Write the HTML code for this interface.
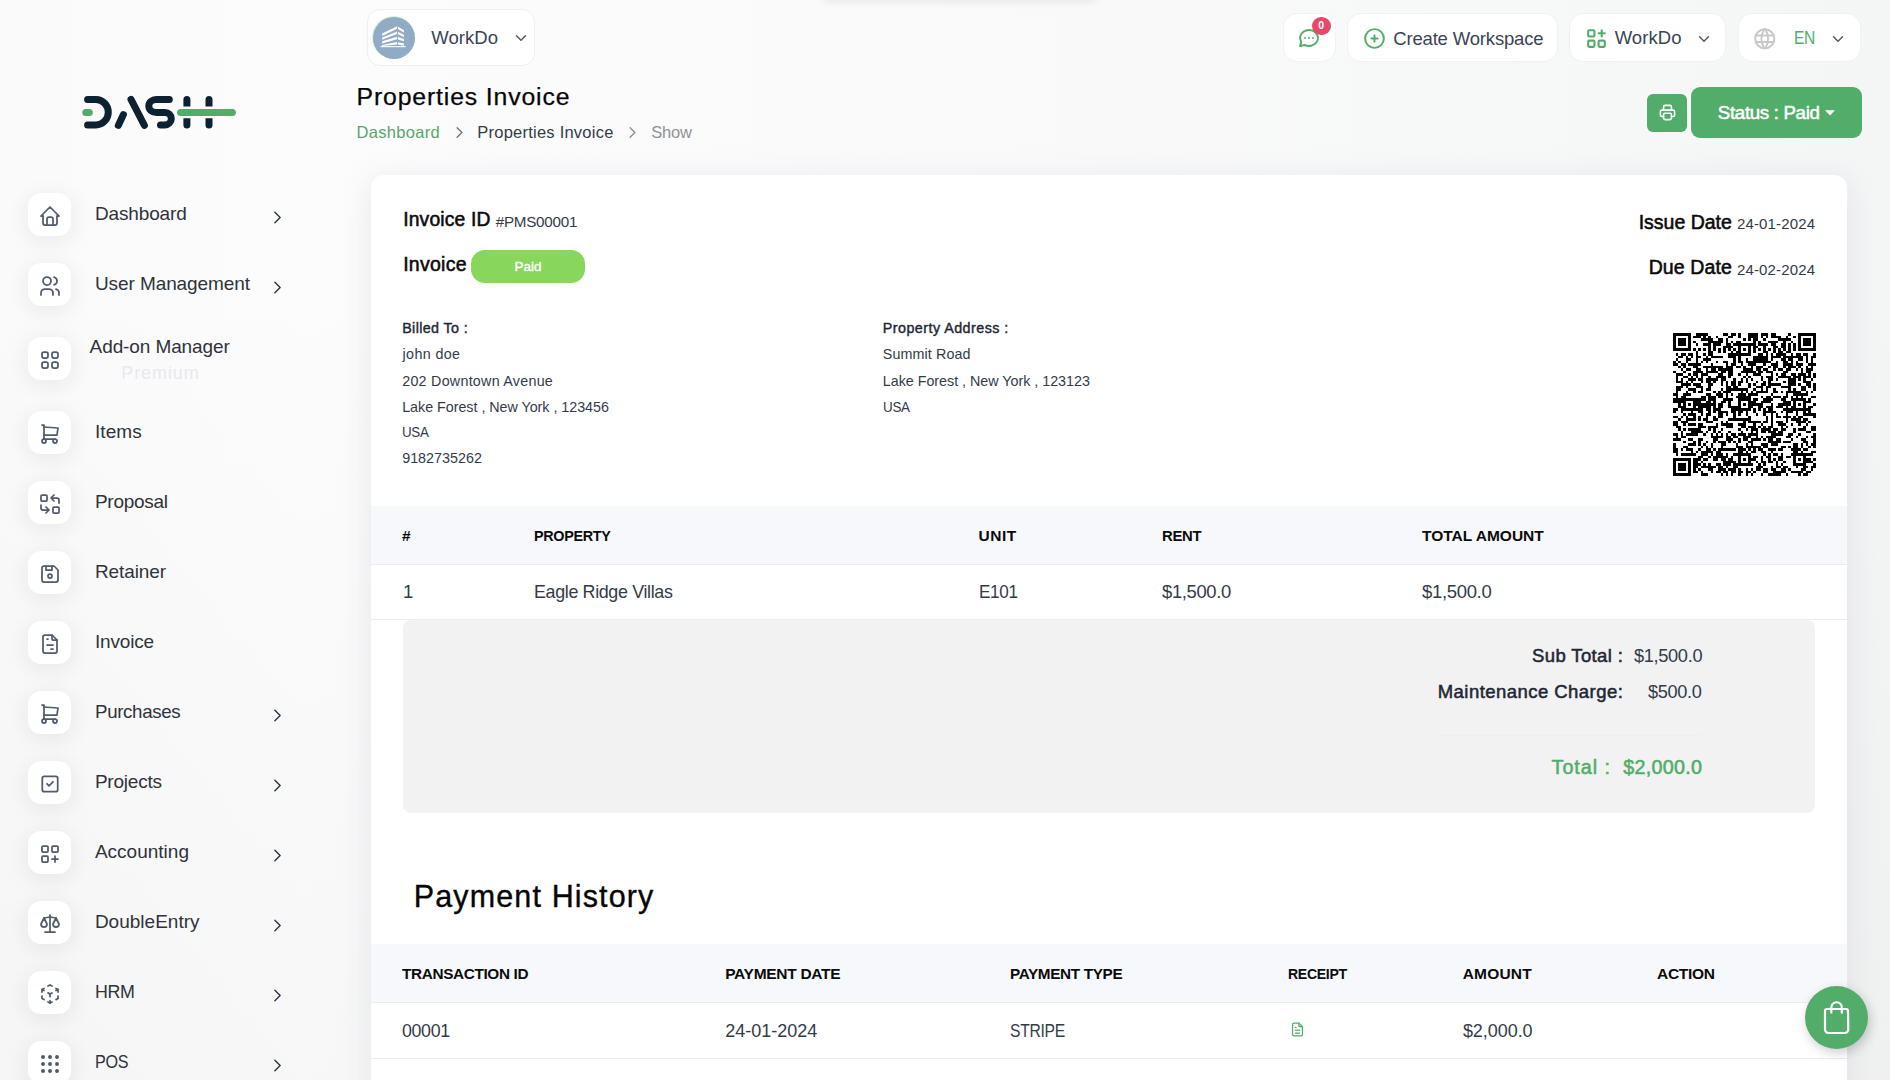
<!DOCTYPE html>
<html><head><meta charset="utf-8"><title>Properties Invoice</title>
<style>
*{box-sizing:border-box;margin:0;padding:0}
html,body{width:1890px;height:1080px;overflow:hidden}
body{font-family:"Liberation Sans",sans-serif;background:#f6f7f7;position:relative}
.tx{position:absolute;white-space:nowrap;line-height:1}
.bgr{position:absolute;left:0;top:0;width:1890px;height:1080px;background:linear-gradient(180deg,rgba(40,60,50,0) 0px,rgba(40,60,50,0) 250px,rgba(40,60,50,.025) 1080px),linear-gradient(90deg,#fafafa 0px,#fcfcfc 300px,#fafafa 900px,#f7f8f8 1500px,#f4f5f5 1890px)}
.ibox{position:absolute;left:28px;width:43px;height:43px;border-radius:13px;background:#fff;box-shadow:0 4px 22px rgba(30,40,50,.085)}
.hb{position:absolute;background:#fff;border-radius:14px;border:1px solid #f1f1f1}
.card{position:absolute;left:371px;top:175px;width:1476px;height:1000px;background:#fff;border-radius:13px;box-shadow:0 6px 30px rgba(182,186,203,.3)}
</style></head>
<body>
<div class="bgr"></div>
<div style="position:absolute;left:820px;top:-20px;width:280px;height:20px;border-radius:10px;box-shadow:0 2px 8px rgba(0,0,0,.08)"></div>
<div class="ibox" style="top:193px"></div>
<svg style="position:absolute;left:37.5px;top:203.6px;" width="24" height="24" viewBox="0 0 24 24" fill="none" stroke="#525b6b" stroke-width="1.75" stroke-linecap="round" stroke-linejoin="round"><path d="M5 12l-2 0l9 -9l9 9l-2 0"/><path d="M5 12v7a2 2 0 0 0 2 2h10a2 2 0 0 0 2 -2v-7"/><path d="M9 21v-6a2 2 0 0 1 2 -2h2a2 2 0 0 1 2 2v6"/></svg>
<div class="tx" style="left:94.90px;top:204.01px;font-size:19px;color:#30333a;font-weight:400;letter-spacing:-0.131px;">Dashboard</div>
<svg style="position:absolute;left:266.9px;top:206.75px;" width="21" height="21" viewBox="0 0 24 24" fill="none" stroke="#293240" stroke-width="1.6" stroke-linecap="round" stroke-linejoin="round"><path d="M9 6l6 6l-6 6"/></svg>
<div class="ibox" style="top:263px"></div>
<svg style="position:absolute;left:37.5px;top:273.6px;" width="24" height="24" viewBox="0 0 24 24" fill="none" stroke="#525b6b" stroke-width="1.75" stroke-linecap="round" stroke-linejoin="round"><path d="M5 7a4 4 0 1 0 8 0a4 4 0 1 0 -8 0"/><path d="M3 21v-2a4 4 0 0 1 4 -4h4a4 4 0 0 1 4 4v2"/><path d="M16 3.13a4 4 0 0 1 0 7.75"/><path d="M21 21v-2a4 4 0 0 0 -3 -3.85"/></svg>
<div class="tx" style="left:94.90px;top:274.01px;font-size:19px;color:#30333a;font-weight:400;letter-spacing:-0.079px;">User Management</div>
<svg style="position:absolute;left:266.9px;top:276.75px;" width="21" height="21" viewBox="0 0 24 24" fill="none" stroke="#293240" stroke-width="1.6" stroke-linecap="round" stroke-linejoin="round"><path d="M9 6l6 6l-6 6"/></svg>
<div class="ibox" style="top:337px"></div>
<svg style="position:absolute;left:37.5px;top:347.6px;" width="24" height="24" viewBox="0 0 24 24" fill="none" stroke="#525b6b" stroke-width="1.75" stroke-linecap="round" stroke-linejoin="round"><rect x="4" y="4" width="6" height="6" rx="2"/><rect x="14" y="4" width="6" height="6" rx="2"/><rect x="4" y="14" width="6" height="6" rx="2"/><rect x="14" y="14" width="6" height="6" rx="2"/></svg>
<div class="tx" style="left:89.60px;top:336.71px;font-size:19px;color:#30333a;font-weight:400;letter-spacing:-0.104px;">Add-on Manager</div>
<div class="tx" style="left:121.30px;top:363.56px;font-size:18px;color:#ebe6f1;font-weight:400;letter-spacing:0.900px;">Premium</div>
<div class="ibox" style="top:411px"></div>
<svg style="position:absolute;left:37.5px;top:421.6px;" width="24" height="24" viewBox="0 0 24 24" fill="none" stroke="#525b6b" stroke-width="1.75" stroke-linecap="round" stroke-linejoin="round"><path d="M4 19a2 2 0 1 0 4 0a2 2 0 1 0 -4 0"/><path d="M15 19a2 2 0 1 0 4 0a2 2 0 1 0 -4 0"/><path d="M17 17h-11v-14h-2"/><path d="M6 5l14 1l-1 7h-13"/></svg>
<div class="tx" style="left:94.90px;top:422.01px;font-size:19px;color:#30333a;font-weight:400;letter-spacing:0.112px;">Items</div>
<div class="ibox" style="top:481px"></div>
<svg style="position:absolute;left:37.5px;top:491.6px;" width="24" height="24" viewBox="0 0 24 24" fill="none" stroke="#525b6b" stroke-width="1.75" stroke-linecap="round" stroke-linejoin="round"><rect x="3" y="3" width="6" height="6" rx="1"/><rect x="15" y="15" width="6" height="6" rx="1"/><path d="M21 11v-3a2 2 0 0 0 -2 -2h-6l3 3m0 -6l-3 3"/><path d="M3 13v3a2 2 0 0 0 2 2h6l-3 -3m0 6l3 -3"/></svg>
<div class="tx" style="left:94.90px;top:492.01px;font-size:19px;color:#30333a;font-weight:400;letter-spacing:-0.257px;">Proposal</div>
<div class="ibox" style="top:551px"></div>
<svg style="position:absolute;left:37.5px;top:561.6px;" width="24" height="24" viewBox="0 0 24 24" fill="none" stroke="#525b6b" stroke-width="1.75" stroke-linecap="round" stroke-linejoin="round"><path d="M6 4h10l4 4v10a2 2 0 0 1 -2 2h-12a2 2 0 0 1 -2 -2v-12a2 2 0 0 1 2 -2"/><path d="M10 14a2 2 0 1 0 4 0a2 2 0 1 0 -4 0"/><path d="M14 4l0 4l-6 0l0 -4"/></svg>
<div class="tx" style="left:94.90px;top:562.01px;font-size:19px;color:#30333a;font-weight:400;letter-spacing:-0.086px;">Retainer</div>
<div class="ibox" style="top:621px"></div>
<svg style="position:absolute;left:37.5px;top:631.6px;" width="24" height="24" viewBox="0 0 24 24" fill="none" stroke="#525b6b" stroke-width="1.75" stroke-linecap="round" stroke-linejoin="round"><path d="M14 3v4a1 1 0 0 0 1 1h4"/><path d="M17 21h-10a2 2 0 0 1 -2 -2v-14a2 2 0 0 1 2 -2h7l5 5v11a2 2 0 0 1 -2 2z"/><path d="M9 7l1 0"/><path d="M9 13l6 0"/><path d="M13 17l2 0"/></svg>
<div class="tx" style="left:94.90px;top:632.01px;font-size:19px;color:#30333a;font-weight:400;letter-spacing:-0.167px;">Invoice</div>
<div class="ibox" style="top:691px"></div>
<svg style="position:absolute;left:37.5px;top:701.6px;" width="24" height="24" viewBox="0 0 24 24" fill="none" stroke="#525b6b" stroke-width="1.75" stroke-linecap="round" stroke-linejoin="round"><path d="M4 19a2 2 0 1 0 4 0a2 2 0 1 0 -4 0"/><path d="M15 19a2 2 0 1 0 4 0a2 2 0 1 0 -4 0"/><path d="M17 17h-11v-14h-2"/><path d="M6 5l14 1l-1 7h-13"/></svg>
<div class="tx" style="left:94.90px;top:702.01px;font-size:19px;color:#30333a;font-weight:400;letter-spacing:-0.350px;transform:scaleX(0.9856);transform-origin:0.00px 0;">Purchases</div>
<svg style="position:absolute;left:266.9px;top:704.75px;" width="21" height="21" viewBox="0 0 24 24" fill="none" stroke="#293240" stroke-width="1.6" stroke-linecap="round" stroke-linejoin="round"><path d="M9 6l6 6l-6 6"/></svg>
<div class="ibox" style="top:761px"></div>
<svg style="position:absolute;left:37.5px;top:771.6px;" width="24" height="24" viewBox="0 0 24 24" fill="none" stroke="#525b6b" stroke-width="1.75" stroke-linecap="round" stroke-linejoin="round"><rect x="4.3" y="4.3" width="15.4" height="15.4" rx="2"/><path d="M9 11.8l2 2l4 -4"/></svg>
<div class="tx" style="left:94.90px;top:772.01px;font-size:19px;color:#30333a;font-weight:400;letter-spacing:-0.207px;">Projects</div>
<svg style="position:absolute;left:266.9px;top:774.75px;" width="21" height="21" viewBox="0 0 24 24" fill="none" stroke="#293240" stroke-width="1.6" stroke-linecap="round" stroke-linejoin="round"><path d="M9 6l6 6l-6 6"/></svg>
<div class="ibox" style="top:831px"></div>
<svg style="position:absolute;left:37.5px;top:841.6px;" width="24" height="24" viewBox="0 0 24 24" fill="none" stroke="#525b6b" stroke-width="1.75" stroke-linecap="round" stroke-linejoin="round"><rect x="4" y="4" width="6" height="6" rx="1"/><rect x="14" y="4" width="6" height="6" rx="1"/><rect x="4" y="14" width="6" height="6" rx="1"/><path d="M14 17h6m-3 -3v6"/></svg>
<div class="tx" style="left:94.90px;top:842.01px;font-size:19px;color:#30333a;font-weight:400;letter-spacing:0.011px;">Accounting</div>
<svg style="position:absolute;left:266.9px;top:844.75px;" width="21" height="21" viewBox="0 0 24 24" fill="none" stroke="#293240" stroke-width="1.6" stroke-linecap="round" stroke-linejoin="round"><path d="M9 6l6 6l-6 6"/></svg>
<div class="ibox" style="top:901px"></div>
<svg style="position:absolute;left:37.5px;top:911.6px;" width="24" height="24" viewBox="0 0 24 24" fill="none" stroke="#525b6b" stroke-width="1.75" stroke-linecap="round" stroke-linejoin="round"><path d="M7 20l10 0"/><path d="M6 6l6 -1l6 1"/><path d="M12 3l0 17"/><path d="M9 12l-3 -6l-3 6a3 3 0 0 0 6 0"/><path d="M21 12l-3 -6l-3 6a3 3 0 0 0 6 0"/></svg>
<div class="tx" style="left:94.90px;top:912.01px;font-size:19px;color:#30333a;font-weight:400;letter-spacing:0.005px;">DoubleEntry</div>
<svg style="position:absolute;left:266.9px;top:914.75px;" width="21" height="21" viewBox="0 0 24 24" fill="none" stroke="#293240" stroke-width="1.6" stroke-linecap="round" stroke-linejoin="round"><path d="M9 6l6 6l-6 6"/></svg>
<div class="ibox" style="top:971px"></div>
<svg style="position:absolute;left:37.5px;top:981.6px;" width="24" height="24" viewBox="0 0 24 24" fill="none" stroke="#525b6b" stroke-width="1.75" stroke-linecap="round" stroke-linejoin="round"><path d="M6 17.6l-2 -1.1v-2.5"/><path d="M4 10v-2.5l2 -1.1"/><path d="M10 4.1l2 -1.1l2 1.1"/><path d="M18 6.4l2 1.1v2.5"/><path d="M20 14v2.5l-2 1.12"/><path d="M14 19.9l-2 1.1l-2 -1.1"/><path d="M12 12l2 -1.1"/><path d="M12 12l0 2.5"/><path d="M12 18.5l0 2.5"/><path d="M12 12l-2 -1.12"/><path d="M18 8.6l2 -1.1"/><path d="M6 8.6l-2 -1.1"/></svg>
<div class="tx" style="left:94.90px;top:982.01px;font-size:19px;color:#30333a;font-weight:400;letter-spacing:-0.350px;transform:scaleX(0.9377);transform-origin:0.00px 0;">HRM</div>
<svg style="position:absolute;left:266.9px;top:984.75px;" width="21" height="21" viewBox="0 0 24 24" fill="none" stroke="#293240" stroke-width="1.6" stroke-linecap="round" stroke-linejoin="round"><path d="M9 6l6 6l-6 6"/></svg>
<div class="ibox" style="top:1041px"></div>
<svg style="position:absolute;left:37.5px;top:1051.6px;" width="24" height="24" viewBox="0 0 24 24" fill="none" stroke="#525b6b" stroke-width="1.75" stroke-linecap="round" stroke-linejoin="round"><circle cx="5" cy="5" r="1.1" fill="currentColor"/><circle cx="5" cy="12" r="1.1" fill="currentColor"/><circle cx="5" cy="19" r="1.1" fill="currentColor"/><circle cx="12" cy="5" r="1.1" fill="currentColor"/><circle cx="12" cy="12" r="1.1" fill="currentColor"/><circle cx="12" cy="19" r="1.1" fill="currentColor"/><circle cx="19" cy="5" r="1.1" fill="currentColor"/><circle cx="19" cy="12" r="1.1" fill="currentColor"/><circle cx="19" cy="19" r="1.1" fill="currentColor"/></svg>
<div class="tx" style="left:94.90px;top:1052.01px;font-size:19px;color:#30333a;font-weight:400;letter-spacing:-0.350px;transform:scaleX(0.8503);transform-origin:0.00px 0;">POS</div>
<svg style="position:absolute;left:266.9px;top:1054.75px;" width="21" height="21" viewBox="0 0 24 24" fill="none" stroke="#293240" stroke-width="1.6" stroke-linecap="round" stroke-linejoin="round"><path d="M9 6l6 6l-6 6"/></svg>
<svg style="position:absolute;left:0;top:0" width="260" height="160" fill="none" stroke-linecap="round">
<g stroke="#0c2132" stroke-width="7">
<path d="M87.6 99.5H96A12.3 12.7 0 0 1 96 124.9H87.6"/>
<path d="M118.3 125.4L123.4 114.6"/>
<path d="M131 99.3L144.4 125.4"/>
<path d="M169.3 99.5H156.2A7.4 6.5 0 0 0 156.2 112.5H165A6.3 6.2 0 0 1 165 124.9H160.5"/>
<path d="M183.4 106.5V99.4A3.5 3.5 0 0 1 190.4 99.4V106.5Z" fill="#0c2132" stroke="none"/><path d="M183.4 118.2V125.1A3.5 3.5 0 0 0 190.4 125.1V118.2Z" fill="#0c2132" stroke="none"/>
<path d="M205.5 106.5V99.4A3.5 3.5 0 0 1 212.5 99.4V106.5Z" fill="#0c2132" stroke="none"/><path d="M205.5 118.2V125.1A3.5 3.5 0 0 0 212.5 125.1V118.2Z" fill="#0c2132" stroke="none"/>
</g>
<g stroke="#52ad6b" stroke-width="7"><path d="M85.8 112.5H89.3"/><path d="M180.6 112.5H232.4"/></g>
</svg>
<div class="hb" style="left:367px;top:9px;width:168px;height:57px;border:1px solid #efefef;border-radius:13px"></div>
<div style="position:absolute;left:372px;top:16px;width:43px;height:43px;border-radius:50%;background:#d6eedd"></div>
<div style="position:absolute;left:373px;top:17px;width:42px;height:42px;border-radius:50%;background:#91abc4"></div>
<svg style="position:absolute;left:373px;top:17px" width="42" height="42" viewBox="0 0 42 42" fill="#fff">
<path d="M9.2 16.6L24 9.3V11.8L9.2 19Z"/><path d="M9.2 20.4L24 14.6V17L9.2 22.8Z"/><path d="M9.2 24.2L24 19.8V22.2L9.2 26.5Z"/><path d="M9.2 27.9L24 25V27.4L9.2 29Z"/>
<path d="M24.9 9.5L30.9 13.2V15.4L24.9 11.9Z"/><path d="M24.9 14.8L30.9 17.7V19.9L24.9 17.2Z"/><path d="M24.9 20L30.9 22.1V24.3L24.9 22.4Z"/><path d="M24.9 25.2L30.9 26.5V28.7L24.9 27.6Z"/>
<rect x="7.6" y="29.1" width="25.1" height="1.1"/>
</svg>
<div class="tx" style="left:431.30px;top:29.34px;font-size:18.5px;color:#3a4454;font-weight:400;letter-spacing:0.060px;">WorkDo</div>
<svg style="position:absolute;left:511.5px;top:28.7px;" width="18" height="18" viewBox="0 0 24 24" fill="none" stroke="#555b66" stroke-width="2" stroke-linecap="round" stroke-linejoin="round"><path d="M6 9l6 6l6 -6"/></svg>
<div class="hb" style="left:1283px;top:13px;width:53px;height:49px"></div>
<svg style="position:absolute;left:1296.8px;top:25.8px;" width="24" height="24" viewBox="0 0 24 24" fill="none" stroke="#52ad6b" stroke-width="1.95" stroke-linecap="round" stroke-linejoin="round"><path d="M3 20l1.3 -3.9c-2.324 -3.437 -1.426 -7.872 2.1 -10.374c3.526 -2.501 8.59 -2.296 11.845 .48c3.255 2.777 3.695 7.266 1.029 10.501c-2.666 3.235 -7.615 4.215 -11.574 2.293l-4.7 1"/><path d="M12 12l0 .01"/><path d="M8 12l0 .01"/><path d="M16 12l0 .01"/></svg>
<div style="position:absolute;left:1312px;top:16.5px;width:18.5px;height:18.5px;border-radius:50%;background:#e64a68"></div>
<div class="tx" style="left:1318.30px;top:20.31px;font-size:10.5px;color:#fff;font-weight:700;letter-spacing:0.000px;">0</div>
<div class="hb" style="left:1347px;top:13px;width:211px;height:49px"></div>
<svg style="position:absolute;left:1361.7px;top:25.5px;" width="25" height="25" viewBox="0 0 24 24" fill="none" stroke="#52ad6b" stroke-width="1.9" stroke-linecap="round" stroke-linejoin="round"><path d="M3 12a9 9 0 1 0 18 0a9 9 0 0 0 -18 0"/><path d="M9 12h6"/><path d="M12 9v6"/></svg>
<div class="tx" style="left:1393.20px;top:29.54px;font-size:18.5px;color:#3a4454;font-weight:400;letter-spacing:-0.163px;">Create Workspace</div>
<div class="hb" style="left:1569px;top:13px;width:157px;height:49px"></div>
<svg style="position:absolute;left:1583.5px;top:25.5px;" width="25" height="25" viewBox="0 0 24 24" fill="none" stroke="#52ad6b" stroke-width="2" stroke-linecap="round" stroke-linejoin="round"><rect x="4" y="4" width="6" height="6" rx="1"/><rect x="4" y="14" width="6" height="6" rx="1"/><rect x="14" y="14" width="6" height="6" rx="1"/><path d="M14 7h6m-3 -3v6"/></svg>
<div class="tx" style="left:1614.70px;top:29.24px;font-size:18.5px;color:#3a4454;font-weight:400;letter-spacing:0.060px;">WorkDo</div>
<svg style="position:absolute;left:1694.5px;top:29.5px;" width="18" height="18" viewBox="0 0 24 24" fill="none" stroke="#555b66" stroke-width="2" stroke-linecap="round" stroke-linejoin="round"><path d="M6 9l6 6l6 -6"/></svg>
<div class="hb" style="left:1738px;top:13px;width:123px;height:49px"></div>
<svg style="position:absolute;left:1751.8px;top:25.5px;" width="25.5" height="25.5" viewBox="0 0 24 24" fill="none" stroke="#c9c9c9" stroke-width="1.9" stroke-linecap="round" stroke-linejoin="round"><path d="M3 12a9 9 0 1 0 18 0a9 9 0 0 0 -18 0"/><path d="M3.6 9h16.8"/><path d="M3.6 15h16.8"/><path d="M11.5 3a17 17 0 0 0 0 18"/><path d="M12.5 3a17 17 0 0 1 0 18"/></svg>
<div class="tx" style="left:1793.80px;top:29.24px;font-size:18.5px;color:#52ad6b;font-weight:400;letter-spacing:-0.350px;transform:scaleX(0.8402);transform-origin:0.00px 0;">EN</div>
<svg style="position:absolute;left:1828.8px;top:29.5px;" width="18" height="18" viewBox="0 0 24 24" fill="none" stroke="#555b66" stroke-width="2" stroke-linecap="round" stroke-linejoin="round"><path d="M6 9l6 6l6 -6"/></svg>
<div class="tx" style="left:356.50px;top:85.30px;font-size:24.8px;color:#060606;font-weight:400;letter-spacing:0.853px;-webkit-text-stroke:0.25px #060606;">Properties Invoice</div>
<div class="tx" style="left:356.50px;top:123.53px;font-size:16.5px;color:#5aa56d;font-weight:400;letter-spacing:0.300px;">Dashboard</div>
<svg style="position:absolute;left:449.5px;top:122.5px;" width="19" height="19" viewBox="0 0 24 24" fill="none" stroke="#6b7280" stroke-width="1.7" stroke-linecap="round" stroke-linejoin="round"><path d="M9 6l6 6l-6 6"/></svg>
<div class="tx" style="left:477.30px;top:123.53px;font-size:16.5px;color:#343b47;font-weight:400;letter-spacing:0.232px;">Properties Invoice</div>
<svg style="position:absolute;left:623px;top:122.5px;" width="19" height="19" viewBox="0 0 24 24" fill="none" stroke="#8a9099" stroke-width="1.7" stroke-linecap="round" stroke-linejoin="round"><path d="M9 6l6 6l-6 6"/></svg>
<div class="tx" style="left:651.20px;top:123.53px;font-size:16.5px;color:#8e9397;font-weight:400;letter-spacing:-0.183px;">Show</div>
<div style="position:absolute;left:1647px;top:94px;width:40px;height:38px;border-radius:6px;background:#52ad6b"></div>
<svg style="position:absolute;left:1658px;top:103.2px;" width="19" height="19" viewBox="0 0 24 24" fill="none" stroke="#fff" stroke-width="2" stroke-linecap="round" stroke-linejoin="round"><path d="M17 17h2a2 2 0 0 0 2 -2v-4a2 2 0 0 0 -2 -2h-14a2 2 0 0 0 -2 2v4a2 2 0 0 0 2 2h2"/><path d="M17 9v-4a2 2 0 0 0 -2 -2h-6a2 2 0 0 0 -2 2v4"/><path d="M7 15a2 2 0 0 1 2 -2h6a2 2 0 0 1 2 2v4a2 2 0 0 1 -2 2h-6a2 2 0 0 1 -2 -2z"/></svg>
<div style="position:absolute;left:1691px;top:87px;width:171px;height:51px;border-radius:9px;background:#52ad6b"></div>
<div class="tx" style="left:1717.80px;top:104.07px;font-size:18.7px;color:#fff;font-weight:400;letter-spacing:-0.321px;-webkit-text-stroke:0.52px #fff;">Status : Paid</div>
<svg style="position:absolute;left:1825px;top:110px" width="10" height="6"><path d="M0 0.3H10L5 5.5z" fill="#fff"/></svg>
<div class="card"></div>
<div class="tx" style="left:403.20px;top:210.36px;font-size:19.3px;color:#0b0b0b;font-weight:400;letter-spacing:0.178px;-webkit-text-stroke:0.54px #0b0b0b;">Invoice ID</div>
<div class="tx" style="left:495.70px;top:213.83px;font-size:15.2px;color:#343b47;font-weight:400;letter-spacing:-0.244px;">#PMS00001</div>
<div class="tx" style="left:403.20px;top:254.59px;font-size:19.5px;color:#0b0b0b;font-weight:400;letter-spacing:0.250px;-webkit-text-stroke:0.55px #0b0b0b;">Invoice</div>
<div style="position:absolute;left:471px;top:250px;width:114px;height:33px;border-radius:14px;background:#89d65c"></div>
<div class="tx" style="left:514.50px;top:259.67px;font-size:13.5px;color:#fff;font-weight:400;letter-spacing:-0.000px;-webkit-text-stroke:0.38px #fff;">Paid</div>
<div class="tx" style="left:1638.70px;top:212.59px;font-size:19.5px;color:#0b0b0b;font-weight:400;letter-spacing:-0.011px;-webkit-text-stroke:0.55px #0b0b0b;">Issue Date</div>
<div class="tx" style="left:1736.90px;top:216.40px;font-size:15px;color:#343b47;font-weight:400;letter-spacing:0.161px;">24-01-2024</div>
<div class="tx" style="left:1648.70px;top:258.49px;font-size:19.5px;color:#0b0b0b;font-weight:400;letter-spacing:0.100px;-webkit-text-stroke:0.55px #0b0b0b;">Due Date</div>
<div class="tx" style="left:1736.90px;top:262.30px;font-size:15px;color:#343b47;font-weight:400;letter-spacing:0.161px;">24-02-2024</div>
<div class="tx" style="left:402.20px;top:321.09px;font-size:14.3px;color:#1f2733;font-weight:400;letter-spacing:0.375px;-webkit-text-stroke:0.40px #1f2733;">Billed To :</div>
<div class="tx" style="left:402.55px;top:347.09px;font-size:14.3px;color:#343b47;font-weight:400;letter-spacing:0.371px;">john doe</div>
<div class="tx" style="left:402.20px;top:373.79px;font-size:14.3px;color:#343b47;font-weight:400;letter-spacing:0.258px;">202 Downtown Avenue</div>
<div class="tx" style="left:402.20px;top:399.79px;font-size:14.3px;color:#343b47;font-weight:400;letter-spacing:-0.023px;">Lake Forest , New York , 123456</div>
<div class="tx" style="left:402.20px;top:425.49px;font-size:14.3px;color:#343b47;font-weight:400;letter-spacing:-0.350px;transform:scaleX(0.9373);transform-origin:0.00px 0;">USA</div>
<div class="tx" style="left:402.20px;top:451.39px;font-size:14.3px;color:#343b47;font-weight:400;letter-spacing:0.017px;">9182735262</div>
<div class="tx" style="left:882.80px;top:321.09px;font-size:14.3px;color:#1f2733;font-weight:400;letter-spacing:0.462px;-webkit-text-stroke:0.40px #1f2733;">Property Address :</div>
<div class="tx" style="left:882.80px;top:347.09px;font-size:14.3px;color:#343b47;font-weight:400;letter-spacing:0.110px;">Summit Road</div>
<div class="tx" style="left:882.80px;top:373.79px;font-size:14.3px;color:#343b47;font-weight:400;letter-spacing:-0.013px;">Lake Forest , New York , 123123</div>
<div class="tx" style="left:882.80px;top:399.79px;font-size:14.3px;color:#343b47;font-weight:400;letter-spacing:-0.350px;transform:scaleX(0.9408);transform-origin:0.00px 0;">USA</div>
<svg style="position:absolute;left:1673px;top:333px" width="142.5" height="142.5" viewBox="0 0 57 57" shape-rendering="crispEdges"><path fill="#000" d="M0 0h7v1h-7zM9 0h5v1h-5zM20 0h2v1h-2zM23 0h2v1h-2zM26 0h1v1h-1zM30 0h4v1h-4zM35 0h3v1h-3zM39 0h2v1h-2zM46 0h1v1h-1zM50 0h7v1h-7zM0 1h1v1h-1zM6 1h1v1h-1zM8 1h3v1h-3zM12 1h1v1h-1zM14 1h1v1h-1zM17 1h1v1h-1zM22 1h2v1h-2zM26 1h1v1h-1zM30 1h4v1h-4zM35 1h1v1h-1zM37 1h1v1h-1zM39 1h4v1h-4zM45 1h1v1h-1zM48 1h1v1h-1zM50 1h1v1h-1zM56 1h1v1h-1zM0 2h1v1h-1zM2 2h3v1h-3zM6 2h1v1h-1zM11 2h5v1h-5zM18 2h2v1h-2zM21 2h1v1h-1zM28 2h1v1h-1zM30 2h1v1h-1zM32 2h2v1h-2zM36 2h1v1h-1zM42 2h5v1h-5zM50 2h1v1h-1zM52 2h3v1h-3zM56 2h1v1h-1zM0 3h1v1h-1zM2 3h3v1h-3zM6 3h1v1h-1zM8 3h1v1h-1zM14 3h6v1h-6zM21 3h1v1h-1zM23 3h1v1h-1zM25 3h2v1h-2zM32 3h1v1h-1zM34 3h1v1h-1zM38 3h4v1h-4zM44 3h1v1h-1zM47 3h1v1h-1zM50 3h1v1h-1zM52 3h3v1h-3zM56 3h1v1h-1zM0 4h1v1h-1zM2 4h3v1h-3zM6 4h1v1h-1zM9 4h1v1h-1zM12 4h3v1h-3zM16 4h3v1h-3zM21 4h2v1h-2zM24 4h9v1h-9zM34 4h4v1h-4zM39 4h2v1h-2zM43 4h2v1h-2zM46 4h1v1h-1zM48 4h1v1h-1zM50 4h1v1h-1zM52 4h3v1h-3zM56 4h1v1h-1zM0 5h1v1h-1zM6 5h1v1h-1zM14 5h1v1h-1zM16 5h1v1h-1zM20 5h4v1h-4zM26 5h1v1h-1zM30 5h1v1h-1zM32 5h2v1h-2zM36 5h1v1h-1zM40 5h2v1h-2zM43 5h2v1h-2zM46 5h1v1h-1zM48 5h1v1h-1zM50 5h1v1h-1zM56 5h1v1h-1zM0 6h7v1h-7zM8 6h1v1h-1zM10 6h1v1h-1zM12 6h1v1h-1zM14 6h1v1h-1zM16 6h1v1h-1zM18 6h1v1h-1zM20 6h1v1h-1zM22 6h1v1h-1zM24 6h1v1h-1zM26 6h1v1h-1zM28 6h1v1h-1zM30 6h1v1h-1zM32 6h1v1h-1zM34 6h1v1h-1zM36 6h1v1h-1zM38 6h1v1h-1zM40 6h1v1h-1zM42 6h1v1h-1zM44 6h1v1h-1zM46 6h1v1h-1zM48 6h1v1h-1zM50 6h7v1h-7zM9 7h1v1h-1zM14 7h2v1h-2zM18 7h1v1h-1zM20 7h1v1h-1zM23 7h1v1h-1zM25 7h2v1h-2zM30 7h1v1h-1zM32 7h1v1h-1zM36 7h2v1h-2zM40 7h1v1h-1zM42 7h2v1h-2zM45 7h2v1h-2zM1 8h1v1h-1zM3 8h2v1h-2zM6 8h2v1h-2zM9 8h1v1h-1zM12 8h1v1h-1zM14 8h2v1h-2zM22 8h9v1h-9zM34 8h2v1h-2zM37 8h1v1h-1zM39 8h1v1h-1zM41 8h4v1h-4zM47 8h1v1h-1zM49 8h2v1h-2zM52 8h2v1h-2zM56 8h1v1h-1zM2 9h2v1h-2zM5 9h1v1h-1zM7 9h1v1h-1zM9 9h2v1h-2zM13 9h1v1h-1zM15 9h5v1h-5zM22 9h3v1h-3zM26 9h1v1h-1zM32 9h6v1h-6zM39 9h4v1h-4zM44 9h8v1h-8zM53 9h1v1h-1zM55 9h2v1h-2zM1 10h1v1h-1zM5 10h2v1h-2zM9 10h1v1h-1zM12 10h3v1h-3zM24 10h1v1h-1zM26 10h1v1h-1zM29 10h1v1h-1zM32 10h6v1h-6zM39 10h1v1h-1zM43 10h2v1h-2zM46 10h2v1h-2zM50 10h2v1h-2zM53 10h1v1h-1zM55 10h1v1h-1zM0 11h1v1h-1zM2 11h1v1h-1zM5 11h1v1h-1zM9 11h1v1h-1zM11 11h1v1h-1zM13 11h1v1h-1zM17 11h1v1h-1zM20 11h2v1h-2zM24 11h1v1h-1zM26 11h2v1h-2zM29 11h10v1h-10zM41 11h1v1h-1zM44 11h2v1h-2zM47 11h1v1h-1zM49 11h1v1h-1zM53 11h1v1h-1zM55 11h1v1h-1zM0 12h2v1h-2zM3 12h2v1h-2zM6 12h5v1h-5zM15 12h1v1h-1zM21 12h1v1h-1zM23 12h2v1h-2zM27 12h1v1h-1zM30 12h3v1h-3zM36 12h1v1h-1zM39 12h3v1h-3zM44 12h4v1h-4zM49 12h3v1h-3zM54 12h3v1h-3zM2 13h1v1h-1zM4 13h1v1h-1zM8 13h2v1h-2zM12 13h8v1h-8zM21 13h3v1h-3zM25 13h2v1h-2zM28 13h1v1h-1zM31 13h1v1h-1zM33 13h3v1h-3zM38 13h1v1h-1zM40 13h2v1h-2zM44 13h1v1h-1zM46 13h3v1h-3zM50 13h1v1h-1zM53 13h1v1h-1zM55 13h1v1h-1zM3 14h1v1h-1zM5 14h2v1h-2zM9 14h2v1h-2zM13 14h1v1h-1zM15 14h2v1h-2zM18 14h6v1h-6zM28 14h4v1h-4zM33 14h2v1h-2zM36 14h2v1h-2zM40 14h1v1h-1zM42 14h2v1h-2zM45 14h2v1h-2zM49 14h1v1h-1zM51 14h1v1h-1zM53 14h3v1h-3zM0 15h1v1h-1zM4 15h1v1h-1zM8 15h4v1h-4zM13 15h5v1h-5zM19 15h2v1h-2zM22 15h2v1h-2zM27 15h6v1h-6zM34 15h2v1h-2zM37 15h3v1h-3zM44 15h2v1h-2zM51 15h1v1h-1zM53 15h2v1h-2zM1 16h3v1h-3zM6 16h1v1h-1zM8 16h2v1h-2zM11 16h3v1h-3zM18 16h2v1h-2zM22 16h2v1h-2zM26 16h1v1h-1zM29 16h1v1h-1zM32 16h3v1h-3zM39 16h1v1h-1zM41 16h1v1h-1zM43 16h2v1h-2zM47 16h2v1h-2zM50 16h3v1h-3zM54 16h1v1h-1zM56 16h1v1h-1zM1 17h1v1h-1zM4 17h2v1h-2zM7 17h1v1h-1zM9 17h1v1h-1zM11 17h1v1h-1zM14 17h1v1h-1zM17 17h4v1h-4zM22 17h1v1h-1zM28 17h1v1h-1zM30 17h1v1h-1zM35 17h1v1h-1zM37 17h3v1h-3zM42 17h5v1h-5zM48 17h3v1h-3zM52 17h3v1h-3zM56 17h1v1h-1zM1 18h1v1h-1zM3 18h1v1h-1zM6 18h3v1h-3zM10 18h2v1h-2zM13 18h5v1h-5zM19 18h2v1h-2zM24 18h1v1h-1zM27 18h1v1h-1zM29 18h1v1h-1zM31 18h1v1h-1zM35 18h1v1h-1zM38 18h2v1h-2zM41 18h1v1h-1zM46 18h3v1h-3zM50 18h1v1h-1zM52 18h1v1h-1zM55 18h1v1h-1zM1 19h3v1h-3zM5 19h1v1h-1zM7 19h1v1h-1zM11 19h1v1h-1zM13 19h2v1h-2zM16 19h1v1h-1zM19 19h1v1h-1zM21 19h1v1h-1zM23 19h2v1h-2zM26 19h2v1h-2zM29 19h1v1h-1zM33 19h1v1h-1zM36 19h1v1h-1zM38 19h1v1h-1zM44 19h1v1h-1zM46 19h3v1h-3zM52 19h3v1h-3zM3 20h4v1h-4zM8 20h3v1h-3zM14 20h2v1h-2zM19 20h1v1h-1zM21 20h1v1h-1zM23 20h2v1h-2zM26 20h1v1h-1zM30 20h1v1h-1zM32 20h1v1h-1zM35 20h2v1h-2zM38 20h5v1h-5zM46 20h3v1h-3zM50 20h1v1h-1zM53 20h2v1h-2zM56 20h1v1h-1zM1 21h3v1h-3zM5 21h1v1h-1zM9 21h3v1h-3zM14 21h1v1h-1zM21 21h2v1h-2zM24 21h2v1h-2zM30 21h1v1h-1zM33 21h3v1h-3zM37 21h2v1h-2zM43 21h4v1h-4zM51 21h2v1h-2zM54 21h1v1h-1zM56 21h1v1h-1zM1 22h2v1h-2zM6 22h3v1h-3zM11 22h1v1h-1zM13 22h2v1h-2zM19 22h1v1h-1zM21 22h9v1h-9zM32 22h1v1h-1zM35 22h1v1h-1zM37 22h1v1h-1zM40 22h1v1h-1zM46 22h1v1h-1zM48 22h1v1h-1zM51 22h2v1h-2zM56 22h1v1h-1zM1 23h1v1h-1zM5 23h1v1h-1zM8 23h1v1h-1zM10 23h2v1h-2zM16 23h1v1h-1zM18 23h1v1h-1zM20 23h3v1h-3zM27 23h1v1h-1zM29 23h1v1h-1zM31 23h1v1h-1zM33 23h5v1h-5zM40 23h2v1h-2zM43 23h1v1h-1zM45 23h6v1h-6zM53 23h1v1h-1zM55 23h1v1h-1zM0 24h2v1h-2zM4 24h3v1h-3zM13 24h2v1h-2zM17 24h3v1h-3zM21 24h1v1h-1zM23 24h1v1h-1zM26 24h3v1h-3zM30 24h4v1h-4zM39 24h1v1h-1zM45 24h1v1h-1zM48 24h6v1h-6zM1 25h1v1h-1zM3 25h2v1h-2zM11 25h2v1h-2zM14 25h3v1h-3zM18 25h2v1h-2zM21 25h1v1h-1zM25 25h6v1h-6zM35 25h1v1h-1zM37 25h2v1h-2zM40 25h3v1h-3zM44 25h2v1h-2zM47 25h1v1h-1zM49 25h1v1h-1zM51 25h1v1h-1zM55 25h2v1h-2zM0 26h13v1h-13zM14 26h3v1h-3zM20 26h4v1h-4zM26 26h5v1h-5zM32 26h2v1h-2zM36 26h4v1h-4zM43 26h2v1h-2zM47 26h6v1h-6zM54 26h1v1h-1zM0 27h5v1h-5zM8 27h3v1h-3zM13 27h2v1h-2zM16 27h1v1h-1zM19 27h2v1h-2zM22 27h1v1h-1zM26 27h1v1h-1zM30 27h3v1h-3zM35 27h4v1h-4zM44 27h3v1h-3zM48 27h1v1h-1zM52 27h3v1h-3zM2 28h1v1h-1zM4 28h1v1h-1zM6 28h1v1h-1zM8 28h9v1h-9zM18 28h2v1h-2zM22 28h1v1h-1zM26 28h1v1h-1zM28 28h1v1h-1zM30 28h6v1h-6zM39 28h1v1h-1zM42 28h5v1h-5zM48 28h1v1h-1zM50 28h1v1h-1zM52 28h1v1h-1zM56 28h1v1h-1zM2 29h3v1h-3zM8 29h1v1h-1zM10 29h5v1h-5zM16 29h1v1h-1zM18 29h2v1h-2zM22 29h5v1h-5zM30 29h2v1h-2zM34 29h2v1h-2zM37 29h3v1h-3zM41 29h3v1h-3zM45 29h1v1h-1zM47 29h2v1h-2zM52 29h1v1h-1zM54 29h2v1h-2zM0 30h2v1h-2zM3 30h9v1h-9zM13 30h2v1h-2zM16 30h3v1h-3zM23 30h8v1h-8zM32 30h1v1h-1zM34 30h1v1h-1zM36 30h1v1h-1zM38 30h2v1h-2zM44 30h11v1h-11zM0 31h1v1h-1zM3 31h1v1h-1zM7 31h1v1h-1zM10 31h2v1h-2zM14 31h1v1h-1zM16 31h1v1h-1zM18 31h4v1h-4zM23 31h2v1h-2zM26 31h2v1h-2zM29 31h1v1h-1zM32 31h1v1h-1zM36 31h5v1h-5zM43 31h1v1h-1zM45 31h3v1h-3zM49 31h1v1h-1zM52 31h1v1h-1zM54 31h1v1h-1zM4 32h1v1h-1zM6 32h3v1h-3zM11 32h1v1h-1zM13 32h2v1h-2zM18 32h2v1h-2zM21 32h1v1h-1zM24 32h1v1h-1zM26 32h1v1h-1zM29 32h1v1h-1zM33 32h1v1h-1zM36 32h1v1h-1zM39 32h1v1h-1zM41 32h1v1h-1zM45 32h1v1h-1zM49 32h1v1h-1zM52 32h5v1h-5zM0 33h2v1h-2zM3 33h1v1h-1zM5 33h1v1h-1zM8 33h1v1h-1zM10 33h1v1h-1zM13 33h1v1h-1zM16 33h1v1h-1zM18 33h2v1h-2zM24 33h1v1h-1zM30 33h1v1h-1zM37 33h1v1h-1zM39 33h1v1h-1zM41 33h2v1h-2zM44 33h3v1h-3zM48 33h1v1h-1zM50 33h2v1h-2zM56 33h1v1h-1zM2 34h1v1h-1zM5 34h4v1h-4zM10 34h1v1h-1zM12 34h2v1h-2zM16 34h2v1h-2zM22 34h9v1h-9zM37 34h1v1h-1zM39 34h1v1h-1zM45 34h1v1h-1zM47 34h4v1h-4zM52 34h2v1h-2zM0 35h2v1h-2zM3 35h3v1h-3zM13 35h3v1h-3zM19 35h1v1h-1zM21 35h1v1h-1zM28 35h1v1h-1zM30 35h5v1h-5zM36 35h2v1h-2zM39 35h1v1h-1zM41 35h3v1h-3zM45 35h1v1h-1zM49 35h4v1h-4zM54 35h1v1h-1zM0 36h2v1h-2zM4 36h1v1h-1zM6 36h3v1h-3zM10 36h2v1h-2zM17 36h1v1h-1zM19 36h5v1h-5zM26 36h3v1h-3zM32 36h1v1h-1zM35 36h1v1h-1zM39 36h1v1h-1zM42 36h3v1h-3zM47 36h1v1h-1zM50 36h1v1h-1zM53 36h1v1h-1zM1 37h2v1h-2zM10 37h3v1h-3zM14 37h4v1h-4zM21 37h3v1h-3zM27 37h2v1h-2zM30 37h3v1h-3zM34 37h1v1h-1zM36 37h1v1h-1zM38 37h2v1h-2zM43 37h1v1h-1zM45 37h1v1h-1zM52 37h1v1h-1zM55 37h2v1h-2zM2 38h1v1h-1zM4 38h1v1h-1zM6 38h5v1h-5zM14 38h1v1h-1zM16 38h1v1h-1zM19 38h1v1h-1zM26 38h1v1h-1zM29 38h1v1h-1zM31 38h3v1h-3zM35 38h4v1h-4zM40 38h2v1h-2zM43 38h2v1h-2zM48 38h1v1h-1zM50 38h3v1h-3zM55 38h2v1h-2zM3 39h1v1h-1zM7 39h5v1h-5zM13 39h1v1h-1zM16 39h1v1h-1zM18 39h1v1h-1zM22 39h1v1h-1zM27 39h1v1h-1zM31 39h1v1h-1zM33 39h1v1h-1zM35 39h2v1h-2zM38 39h3v1h-3zM42 39h2v1h-2zM48 39h1v1h-1zM53 39h2v1h-2zM0 40h2v1h-2zM3 40h1v1h-1zM5 40h5v1h-5zM12 40h1v1h-1zM15 40h1v1h-1zM17 40h1v1h-1zM19 40h1v1h-1zM21 40h1v1h-1zM23 40h2v1h-2zM26 40h3v1h-3zM30 40h4v1h-4zM39 40h5v1h-5zM46 40h2v1h-2zM50 40h1v1h-1zM56 40h1v1h-1zM1 41h1v1h-1zM3 41h2v1h-2zM15 41h5v1h-5zM21 41h2v1h-2zM24 41h2v1h-2zM28 41h3v1h-3zM33 41h1v1h-1zM35 41h1v1h-1zM37 41h4v1h-4zM45 41h2v1h-2zM49 41h1v1h-1zM53 41h1v1h-1zM55 41h2v1h-2zM0 42h3v1h-3zM6 42h2v1h-2zM10 42h2v1h-2zM16 42h2v1h-2zM21 42h3v1h-3zM26 42h1v1h-1zM28 42h2v1h-2zM31 42h4v1h-4zM36 42h1v1h-1zM38 42h2v1h-2zM41 42h2v1h-2zM47 42h1v1h-1zM51 42h2v1h-2zM56 42h1v1h-1zM4 43h1v1h-1zM8 43h1v1h-1zM10 43h1v1h-1zM13 43h1v1h-1zM16 43h1v1h-1zM18 43h3v1h-3zM22 43h1v1h-1zM24 43h1v1h-1zM26 43h1v1h-1zM30 43h2v1h-2zM38 43h5v1h-5zM44 43h3v1h-3zM52 43h2v1h-2zM56 43h1v1h-1zM0 44h1v1h-1zM6 44h3v1h-3zM10 44h1v1h-1zM12 44h1v1h-1zM15 44h1v1h-1zM19 44h2v1h-2zM25 44h1v1h-1zM29 44h1v1h-1zM31 44h1v1h-1zM35 44h3v1h-3zM39 44h3v1h-3zM48 44h2v1h-2zM51 44h1v1h-1zM53 44h1v1h-1zM55 44h2v1h-2zM0 45h1v1h-1zM4 45h2v1h-2zM11 45h1v1h-1zM13 45h1v1h-1zM15 45h1v1h-1zM19 45h1v1h-1zM25 45h3v1h-3zM29 45h6v1h-6zM36 45h2v1h-2zM43 45h2v1h-2zM46 45h1v1h-1zM48 45h2v1h-2zM51 45h1v1h-1zM54 45h1v1h-1zM56 45h1v1h-1zM0 46h2v1h-2zM3 46h1v1h-1zM5 46h3v1h-3zM10 46h1v1h-1zM13 46h2v1h-2zM16 46h1v1h-1zM18 46h7v1h-7zM26 46h3v1h-3zM30 46h1v1h-1zM32 46h1v1h-1zM34 46h2v1h-2zM38 46h3v1h-3zM42 46h2v1h-2zM47 46h4v1h-4zM52 46h2v1h-2zM0 47h2v1h-2zM7 47h1v1h-1zM9 47h1v1h-1zM11 47h5v1h-5zM17 47h2v1h-2zM26 47h2v1h-2zM29 47h1v1h-1zM31 47h2v1h-2zM35 47h2v1h-2zM39 47h1v1h-1zM48 47h2v1h-2zM51 47h1v1h-1zM55 47h2v1h-2zM1 48h1v1h-1zM3 48h6v1h-6zM11 48h3v1h-3zM15 48h1v1h-1zM17 48h3v1h-3zM21 48h1v1h-1zM24 48h7v1h-7zM36 48h1v1h-1zM38 48h1v1h-1zM40 48h2v1h-2zM43 48h1v1h-1zM47 48h9v1h-9zM10 49h2v1h-2zM14 49h1v1h-1zM16 49h6v1h-6zM23 49h1v1h-1zM26 49h1v1h-1zM30 49h1v1h-1zM32 49h2v1h-2zM35 49h1v1h-1zM37 49h2v1h-2zM42 49h2v1h-2zM45 49h2v1h-2zM48 49h1v1h-1zM52 49h1v1h-1zM0 50h7v1h-7zM8 50h3v1h-3zM12 50h2v1h-2zM16 50h2v1h-2zM19 50h2v1h-2zM22 50h2v1h-2zM26 50h1v1h-1zM28 50h1v1h-1zM30 50h3v1h-3zM35 50h1v1h-1zM38 50h1v1h-1zM40 50h1v1h-1zM42 50h2v1h-2zM48 50h1v1h-1zM50 50h1v1h-1zM52 50h3v1h-3zM56 50h1v1h-1zM0 51h1v1h-1zM6 51h1v1h-1zM8 51h2v1h-2zM11 51h1v1h-1zM20 51h5v1h-5zM26 51h1v1h-1zM30 51h1v1h-1zM33 51h1v1h-1zM35 51h2v1h-2zM38 51h2v1h-2zM41 51h1v1h-1zM44 51h1v1h-1zM48 51h1v1h-1zM52 51h4v1h-4zM0 52h1v1h-1zM2 52h3v1h-3zM6 52h1v1h-1zM8 52h3v1h-3zM12 52h1v1h-1zM14 52h1v1h-1zM17 52h2v1h-2zM20 52h3v1h-3zM24 52h8v1h-8zM34 52h1v1h-1zM36 52h1v1h-1zM41 52h1v1h-1zM43 52h1v1h-1zM48 52h5v1h-5zM56 52h1v1h-1zM0 53h1v1h-1zM2 53h3v1h-3zM6 53h1v1h-1zM8 53h2v1h-2zM11 53h6v1h-6zM18 53h2v1h-2zM21 53h1v1h-1zM24 53h2v1h-2zM33 53h3v1h-3zM39 53h1v1h-1zM41 53h2v1h-2zM44 53h2v1h-2zM49 53h1v1h-1zM52 53h2v1h-2zM55 53h2v1h-2zM0 54h1v1h-1zM2 54h3v1h-3zM6 54h1v1h-1zM8 54h1v1h-1zM10 54h1v1h-1zM14 54h2v1h-2zM18 54h3v1h-3zM22 54h3v1h-3zM26 54h1v1h-1zM29 54h1v1h-1zM31 54h1v1h-1zM33 54h2v1h-2zM36 54h2v1h-2zM39 54h2v1h-2zM43 54h2v1h-2zM46 54h1v1h-1zM51 54h2v1h-2zM55 54h1v1h-1zM0 55h1v1h-1zM6 55h1v1h-1zM8 55h2v1h-2zM11 55h1v1h-1zM15 55h1v1h-1zM17 55h2v1h-2zM20 55h2v1h-2zM23 55h2v1h-2zM26 55h2v1h-2zM29 55h2v1h-2zM32 55h1v1h-1zM36 55h2v1h-2zM40 55h5v1h-5zM47 55h5v1h-5zM53 55h2v1h-2zM0 56h7v1h-7zM11 56h3v1h-3zM19 56h1v1h-1zM21 56h1v1h-1zM23 56h1v1h-1zM26 56h1v1h-1zM29 56h1v1h-1zM31 56h1v1h-1zM35 56h1v1h-1zM38 56h5v1h-5zM45 56h1v1h-1zM50 56h1v1h-1zM52 56h2v1h-2z"/></svg>
<div style="position:absolute;left:371px;top:506px;width:1476px;height:59px;background:#f7f8fb;border-bottom:1px solid #ececec"></div>
<div style="position:absolute;left:371px;top:619px;width:1476px;height:1px;background:#ececec"></div>
<div class="tx" style="left:402.10px;top:528.08px;font-size:15.5px;color:#0b0b0b;font-weight:700;letter-spacing:0.000px;">#</div>
<div class="tx" style="left:533.80px;top:528.08px;font-size:15.5px;color:#0b0b0b;font-weight:700;letter-spacing:-0.350px;transform:scaleX(0.9275);transform-origin:0.00px 0;">PROPERTY</div>
<div class="tx" style="left:978.50px;top:528.08px;font-size:15.5px;color:#0b0b0b;font-weight:700;letter-spacing:0.550px;">UNIT</div>
<div class="tx" style="left:1162.10px;top:528.08px;font-size:15.5px;color:#0b0b0b;font-weight:700;letter-spacing:-0.350px;transform:scaleX(0.9599);transform-origin:0.00px 0;">RENT</div>
<div class="tx" style="left:1422.00px;top:528.08px;font-size:15.5px;color:#0b0b0b;font-weight:700;letter-spacing:0.009px;">TOTAL AMOUNT</div>
<div class="tx" style="left:403.00px;top:583.34px;font-size:18.5px;color:#343b47;font-weight:400;letter-spacing:0.000px;">1</div>
<div class="tx" style="left:534.30px;top:583.34px;font-size:18.5px;color:#343b47;font-weight:400;letter-spacing:-0.350px;transform:scaleX(0.9649);transform-origin:0.00px 0;">Eagle Ridge Villas</div>
<div class="tx" style="left:978.50px;top:583.34px;font-size:18.5px;color:#343b47;font-weight:400;letter-spacing:-0.350px;transform:scaleX(0.9253);transform-origin:0.00px 0;">E101</div>
<div class="tx" style="left:1162.10px;top:583.34px;font-size:18.5px;color:#343b47;font-weight:400;letter-spacing:-0.350px;transform:scaleX(0.9950);transform-origin:0.00px 0;">$1,500.0</div>
<div class="tx" style="left:1422.00px;top:583.34px;font-size:18.5px;color:#343b47;font-weight:400;letter-spacing:-0.329px;">$1,500.0</div>
<div style="position:absolute;left:403px;top:620px;width:1412px;height:193px;background:#f2f2f2;border-radius:8px"></div>
<div class="tx" style="left:1532.10px;top:647.34px;font-size:18.5px;color:#1f2733;font-weight:400;letter-spacing:0.370px;-webkit-text-stroke:0.52px #1f2733;">Sub Total :</div>
<div class="tx" style="left:1633.60px;top:647.34px;font-size:18.5px;color:#343b47;font-weight:400;letter-spacing:-0.350px;transform:scaleX(0.9849);transform-origin:0.00px 0;">$1,500.0</div>
<div class="tx" style="left:1437.70px;top:683.34px;font-size:18.5px;color:#1f2733;font-weight:400;letter-spacing:0.461px;-webkit-text-stroke:0.52px #1f2733;">Maintenance Charge:</div>
<div class="tx" style="left:1648.20px;top:683.34px;font-size:18.5px;color:#343b47;font-weight:400;letter-spacing:-0.350px;transform:scaleX(0.9827);transform-origin:0.00px 0;">$500.0</div>
<div style="position:absolute;left:1438px;top:735px;width:264px;height:1px;background:#efefef"></div>
<div class="tx" style="left:1551.60px;top:757.62px;font-size:19.7px;color:#52ad6b;font-weight:400;letter-spacing:0.958px;-webkit-text-stroke:0.55px #52ad6b;">Total :</div>
<div class="tx" style="left:1623.30px;top:757.62px;font-size:19.7px;color:#52ad6b;font-weight:400;letter-spacing:0.300px;-webkit-text-stroke:0.55px #52ad6b;">$2,000.0</div>
<div class="tx" style="left:413.70px;top:881.48px;font-size:30.5px;color:#060606;font-weight:400;letter-spacing:1.139px;-webkit-text-stroke:0.35px #060606;">Payment History</div>
<div style="position:absolute;left:371px;top:944px;width:1476px;height:59px;background:#f7f8fb;border-bottom:1px solid #ececec"></div>
<div style="position:absolute;left:371px;top:1058px;width:1476px;height:1px;background:#ececec"></div>
<div class="tx" style="left:402.40px;top:966.08px;font-size:15.5px;color:#0b0b0b;font-weight:700;letter-spacing:-0.350px;transform:scaleX(0.9879);transform-origin:0.00px 0;">TRANSACTION ID</div>
<div class="tx" style="left:725.20px;top:966.08px;font-size:15.5px;color:#0b0b0b;font-weight:700;letter-spacing:-0.286px;">PAYMENT DATE</div>
<div class="tx" style="left:1009.50px;top:966.08px;font-size:15.5px;color:#0b0b0b;font-weight:700;letter-spacing:-0.350px;transform:scaleX(0.9864);transform-origin:0.00px 0;">PAYMENT TYPE</div>
<div class="tx" style="left:1288.30px;top:966.08px;font-size:15.5px;color:#0b0b0b;font-weight:700;letter-spacing:-0.350px;transform:scaleX(0.9078);transform-origin:0.00px 0;">RECEIPT</div>
<div class="tx" style="left:1462.70px;top:966.08px;font-size:15.5px;color:#0b0b0b;font-weight:700;letter-spacing:0.180px;">AMOUNT</div>
<div class="tx" style="left:1657.10px;top:966.08px;font-size:15.5px;color:#0b0b0b;font-weight:700;letter-spacing:-0.320px;">ACTION</div>
<div class="tx" style="left:402.40px;top:1021.56px;font-size:18px;color:#343b47;font-weight:400;letter-spacing:-0.350px;transform:scaleX(0.9887);transform-origin:0.00px 0;">00001</div>
<div class="tx" style="left:725.20px;top:1021.56px;font-size:18px;color:#343b47;font-weight:400;letter-spacing:0.000px;">24-01-2024</div>
<div class="tx" style="left:1009.50px;top:1021.56px;font-size:18px;color:#343b47;font-weight:400;letter-spacing:-0.350px;transform:scaleX(0.8711);transform-origin:0.00px 0;">STRIPE</div>
<div class="tx" style="left:1462.90px;top:1021.56px;font-size:18px;color:#343b47;font-weight:400;letter-spacing:-0.050px;">$2,000.0</div>
<svg style="position:absolute;left:1288.5px;top:1021px;" width="17" height="17" viewBox="0 0 24 24" fill="none" stroke="#52ad6b" stroke-width="1.8" stroke-linecap="round" stroke-linejoin="round"><path d="M14 3v4a1 1 0 0 0 1 1h4"/><path d="M17 21h-10a2 2 0 0 1 -2 -2v-14a2 2 0 0 1 2 -2h7l5 5v11a2 2 0 0 1 -2 2z"/><path d="M9 9l1 0"/><path d="M9 13l6 0"/><path d="M9 17l6 0"/></svg>
<div style="position:absolute;left:1805px;top:986px;width:63px;height:63px;border-radius:50%;background:#52ad6b;box-shadow:2px 4px 12px rgba(0,0,0,.2)"></div>
<svg style="position:absolute;left:1805px;top:986px" width="63" height="63" fill="none" stroke="#fff" stroke-width="2.2" stroke-linejoin="round"><path d="M22 23H41A2 2 0 0 1 43 25L43.3 43.5A3.5 3.5 0 0 1 39.8 47H23.5A3.5 3.5 0 0 1 20 43.5V25A2 2 0 0 1 22 23Z"/><path d="M26.3 27.5V21.5A5.25 5.25 0 0 1 36.8 21.5V27.5"/></svg>
</body></html>
